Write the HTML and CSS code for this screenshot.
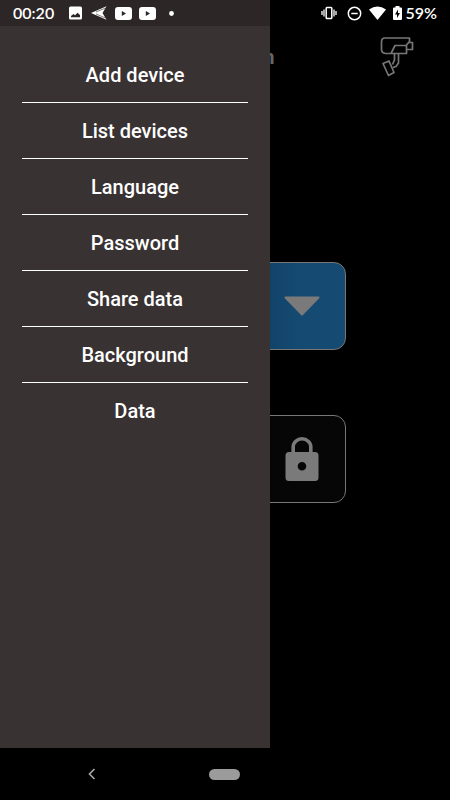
FILE: index.html
```html
<!DOCTYPE html>
<html lang="en">
<head>
<meta charset="utf-8">
<meta name="viewport" content="width=device-width, initial-scale=1">
<title>Device control</title>
<link rel="stylesheet" href="styles.css">
</head>
<body>
<div class="screen">
  <header class="status">
    <div class="status-group">
      <time class="clock">00:20</time>
      <svg width="13" height="14" viewBox="0 0 13 14"><path fill="#fff" fill-rule="evenodd" d="M1.500 0.500h10a1.500 1.500 0 0 1 1.500 1.500v10a1.500 1.500 0 0 1-1.500 1.500h-10a1.500 1.500 0 0 1-1.500-1.500v-10a1.500 1.500 0 0 1 1.500-1.500zM2 11.200h9V9L8.500 6.800 6 9.200 4.500 8 2 10z"/></svg>
      <svg class="send" width="17" height="14" viewBox="0 0 17 14"><path fill="#fff" d="M0 7 15.500.300 11.500 7l4 6.700z"/><path d="M5 6 14.500 2M5 8l9.500 4" stroke="#2c2626" stroke-width=".6" fill="none"/></svg>
      <svg width="17" height="13" viewBox="0 0 17 13"><rect width="17" height="13" rx="3" fill="#fff"/><path fill="#2c2626" d="M6.800 4v5L11 6.500z"/></svg>
      <svg width="17" height="13" viewBox="0 0 17 13"><rect width="17" height="13" rx="3" fill="#fff"/><path fill="#2c2626" d="M6.800 4v5L11 6.500z"/></svg>
      <svg class="dot" width="5" height="5" viewBox="0 0 5 5"><circle cx="2.500" cy="2.500" r="2.400" fill="#fff"/></svg>
    </div>
    <div class="status-group">
      <svg class="vibrate" width="16" height="14" viewBox="0 0 16 14"><path d="M1 5v4M3 3.500v7M13 3.500v7M15 5v4" stroke="#fff" stroke-width="1.300"/><rect x="5.200" y="1.500" width="5.600" height="11" rx=".8" fill="none" stroke="#fff" stroke-width="1.500"/></svg>
      <svg width="15" height="15" viewBox="0 0 15 15"><circle cx="7.500" cy="7.500" r="6.200" fill="none" stroke="#fff" stroke-width="1.500"/><path d="M4.300 7.500h6.400" stroke="#fff" stroke-width="1.500"/></svg>
      <svg width="17" height="14" viewBox="0 0 17 14"><path fill="#fff" d="M0 3.500Q8.500-2.500 17 3.500L8.500 14z"/></svg>
      <svg width="9" height="14" viewBox="0 0 9 14"><path fill="#fff" d="M2.500 0h4v1.500H8a1 1 0 0 1 1 1V13a1 1 0 0 1-1 1H1a1 1 0 0 1-1-1V2.500a1 1 0 0 1 1-1h1.500z"/><path fill="#000" d="M5 3.500 2 8.500h2v3.500l3-5H5z"/></svg>
      <span class="level">59%</span>
    </div>
  </header>

  <div class="stage">
    <main class="app">
      <div class="app-head">
        <h1>n</h1>
        <button class="camera" type="button" aria-label="Camera">
          <svg width="34" height="40" viewBox="0 0 34 40" fill="none" stroke="#777" stroke-width="1.700" stroke-linejoin="round"><path d="M5 1H29.500V4.500L26.500 8V16.500H5.500Q1.500 16 1.500 12.500V5Q1.500 1 5 1zM11 16.500 15 8.500H26.500M29 5.500H32.500V12.500H27M14.500 17V23L12.500 27.500M18.500 17V26L16 29.500 13 30.500M3 26.500 9 24 14 35.500 8.500 38.500z"/></svg>
        </button>
      </div>
      <div class="controls">
        <button class="tile down" type="button" aria-label="Down">
          <svg width="36" height="20" viewBox="0 0 36 20"><path d="M1.500 1.500h33L18 18.500z" fill="#7a7a7a" stroke="#7a7a7a" stroke-width="2" stroke-linejoin="round"/></svg>
        </button>
        <button class="tile" type="button" aria-label="Lock">
          <svg width="34" height="44" viewBox="0 0 34 44"><path d="M8.200 17V10a8.800 8.200 0 0 1 17.600 0v7" fill="none" stroke="#7a7a7a" stroke-width="3.600"/><path fill="#7a7a7a" fill-rule="evenodd" d="M4 15h26a3.500 3.500 0 0 1 3.500 3.500v22A3.500 3.500 0 0 1 30 44H4a3.500 3.500 0 0 1-3.500-3.500v-22A3.500 3.500 0 0 1 4 15zm13 10a4.300 4.300 0 1 0 0 8.600 4.300 4.300 0 0 0 0-8.600z"/></svg>
        </button>
      </div>
    </main>
    <nav class="drawer">
      <a href="#">Add device</a>
      <a href="#">List devices</a>
      <a href="#">Language</a>
      <a href="#">Password</a>
      <a href="#">Share data</a>
      <a href="#">Background</a>
      <a href="#">Data</a>
    </nav>
  </div>

  <footer class="system-nav">
    <button class="back" type="button" aria-label="Back">
      <svg width="8" height="12" viewBox="0 0 8 12"><path d="M6.500 1 1.500 6l5 5" fill="none" stroke="#aaa" stroke-width="1.600"/></svg>
    </button>
    <button class="home" type="button" aria-label="Home"></button>
  </footer>
</div>
</body>
</html>
```
FILE: styles.css
```css
* {
  box-sizing: border-box;
}

body {
  margin: 0;
  background: #000;
  color: #fff;
  font-family: Roboto, "Liberation Sans", sans-serif;
}

button {
  padding: 0;
  border: 0;
  background: none;
}

svg {
  display: block;
  flex: none;
}

.screen {
  display: flex;
  flex-direction: column;
  min-height: 100vh;
}

.status {
  display: flex;
  justify-content: space-between;
  align-items: center;
  height: 26px;
  padding: 0 13px;
  background: linear-gradient(to right, #2c2626 60%, #000 60%);
  font: 600 16px/26px Lato, sans-serif;
}

.status-group {
  display: flex;
  align-items: center;
  gap: 7px;
}

.clock {
  margin-right: 8px;
}

.send {
  margin-left: 2px;
}

.dot {
  margin-left: 6px;
}

.vibrate {
  margin-right: 3px;
}

.level {
  margin-left: -4px;
}

.stage {
  flex: 1;
  display: grid;
  grid-template-columns: 60% 40%;
}

.app {
  grid-area: 1 / 1 / 2 / 3;
}

.drawer {
  grid-area: 1 / 1 / 2 / 2;
  z-index: 1;
  display: flex;
  flex-direction: column;
  padding: 21px 22px;
  background: #393232;
}

.drawer a {
  height: 56px;
  padding-top: 1px;
  border-bottom: 1px solid #fff;
  color: #fff;
  font-size: 20px;
  font-weight: 500;
  line-height: 54px;
  text-align: center;
  text-decoration: none;
}

.drawer a:last-child {
  border-bottom: 0;
}

.app-head {
  display: grid;
  grid-template-columns: 61% 1fr;
  align-items: center;
  height: 62px;
}

.app-head h1 {
  margin: 0;
  color: #666;
  font-size: 20px;
  font-weight: 700;
  text-align: right;
}

.camera {
  justify-self: end;
  margin-right: 36px;
}

.controls {
  display: flex;
  flex-direction: column;
  align-items: center;
  gap: 65px;
  margin-top: 174px;
  padding-left: 34%;
}

.tile {
  display: flex;
  justify-content: center;
  align-items: center;
  width: 88px;
  height: 88px;
  border: 1px solid #777;
  border-radius: 12px;
  background: #060606;
}

.down {
  background: linear-gradient(to right, #114166, #154b73 50%);
}

.system-nav {
  display: grid;
  grid-template-columns: 1fr 1fr 1fr;
  align-items: center;
  height: 52px;
  padding: 0 25px;
}

.system-nav button {
  justify-self: center;
}

.home {
  width: 31px;
  height: 11px;
  border-radius: 6px;
  background: #9b9b9b;
}
```
